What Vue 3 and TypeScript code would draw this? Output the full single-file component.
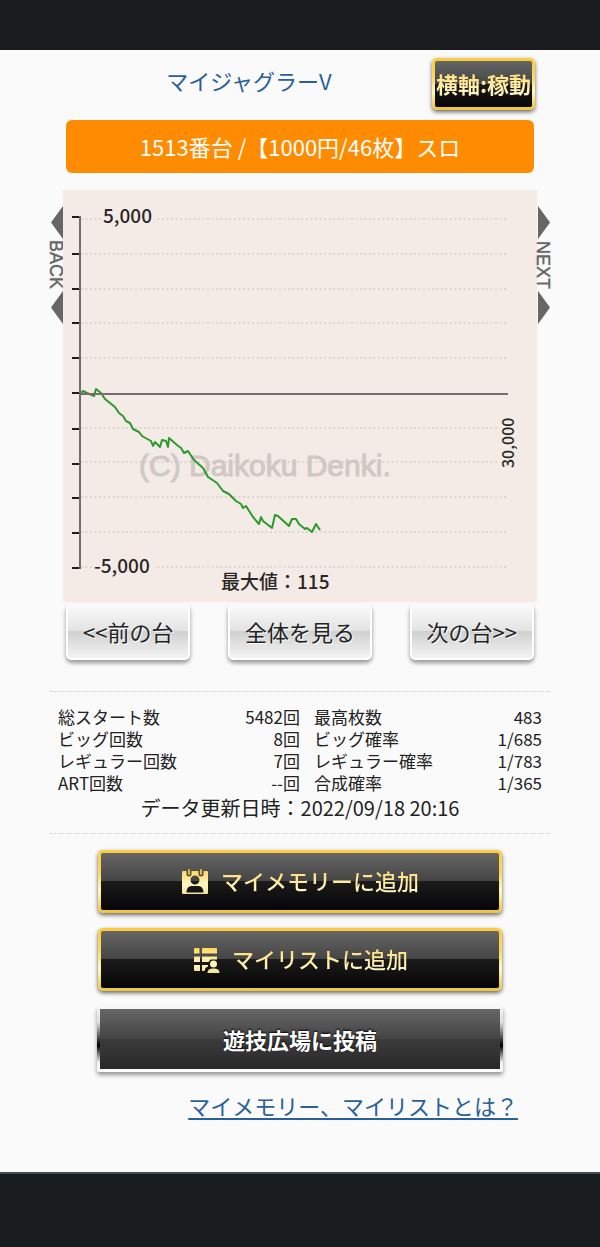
<script setup lang="ts">
interface StatRow {
  label: string
  value: string
  rateLabel: string
  rate: string
}

const stats: StatRow[] = [
  { label: '総スタート数', value: '5482回', rateLabel: '最高枚数', rate: '483' },
  { label: 'ビッグ回数', value: '8回', rateLabel: 'ビッグ確率', rate: '1/685' },
  { label: 'レギュラー回数', value: '7回', rateLabel: 'レギュラー確率', rate: '1/783' },
  { label: 'ART回数', value: '--回', rateLabel: '合成確率', rate: '1/365' },
]

const gridLines: number[] = [29, 64, 99, 133, 168, 238, 272, 307, 342, 377]
const ticks: number[] = [27, 64, 99, 133, 168, 203, 239, 274, 308, 343, 378]

// Medal balance over play: [x, y] in chart units.
const balance: [number, number][] = [
  [18, 203], [20, 201], [24, 203], [31, 206], [33, 199], [38, 203], [42, 209], [47, 213],
  [52, 217], [56, 223], [60, 226], [63, 231], [67, 233], [70, 239], [76, 242], [79, 246],
  [88, 251], [90, 256], [92, 252], [97, 257], [99, 250], [103, 251], [105, 257], [106, 248],
  [114, 255], [118, 258], [121, 263], [125, 261], [131, 270], [140, 278], [145, 287],
  [154, 293], [160, 301], [166, 304], [173, 311], [178, 314], [180, 318], [183, 316],
  [190, 327], [196, 334], [198, 327], [200, 331], [209, 338], [212, 325], [215, 326],
  [226, 336], [229, 329], [233, 329], [236, 334], [242, 339], [244, 338], [249, 342],
  [253, 334], [257, 340],
]
const balancePoints: string = balance.map((p) => p.join(',')).join(' ')
</script>

<template>
  <div class="screen">
    <div class="bar bar-top"></div>
    <main class="page">
      <header class="head">
        <h1 class="title"><a href="#machine">マイジャグラーV</a></h1>
        <button type="button" class="gold axis"><span class="gold-text">横軸:稼動</span></button>
      </header>

      <p class="unit">1513番台 /【1000円/46枚】スロ</p>

      <section class="chart-row">
        <button type="button" class="side">
          <svg viewBox="0 0 12 33" class="arrow"><path d="M12 0V33L0 16.500Z" /></svg>
          <span class="side-text">BACK</span>
          <svg viewBox="0 0 12 33" class="arrow"><path d="M12 0V33L0 16.500Z" /></svg>
        </button>
        <svg class="chart" viewBox="0 0 474 412" role="img" aria-label="スランプグラフ">
          <rect width="474" height="412" fill="#f5ebe6" />
          <line v-for="y in gridLines" :key="y" x1="18" x2="445" :y1="y" :y2="y" class="grid" />
          <rect x="38" y="17" width="54" height="18" fill="#f5ebe6" />
          <rect x="30" y="368" width="62" height="18" fill="#f5ebe6" />
          <rect x="436" y="226" width="18" height="54" fill="#f5ebe6" />
          <text x="76" y="286" class="mark">(C) Daikoku Denki.</text>
          <line v-for="y in ticks" :key="y" x1="9" x2="17" :y1="y" :y2="y" class="tick" />
          <polyline :points="balancePoints" class="balance" />
          <path d="M17 26V379M17 204H445" class="axis-line" />
          <text x="40" y="33" class="num">5,000</text>
          <text x="31" y="383" class="num">-5,000</text>
          <text x="158" y="399" class="num">最大値：115</text>
          <text transform="translate(451 278) rotate(-90)" class="num small">30,000</text>
        </svg>
        <button type="button" class="side">
          <svg viewBox="0 0 12 33" class="arrow"><path d="M0 0V33L12 16.500Z" /></svg>
          <span class="side-text">NEXT</span>
          <svg viewBox="0 0 12 33" class="arrow"><path d="M0 0V33L12 16.500Z" /></svg>
        </button>
      </section>

      <nav class="pager">
        <button type="button" class="light">&lt;&lt;前の台</button>
        <button type="button" class="light">全体を見る</button>
        <button type="button" class="light">次の台&gt;&gt;</button>
      </nav>

      <section class="data">
        <table class="stats">
          <colgroup>
            <col class="col-label" />
            <col class="col-value" />
            <col class="col-label" />
            <col class="col-value" />
          </colgroup>
          <tbody>
            <tr v-for="row in stats" :key="row.label">
              <th scope="row">{{ row.label }}</th>
              <td>{{ row.value }}</td>
              <th scope="row" class="second">{{ row.rateLabel }}</th>
              <td>{{ row.rate }}</td>
            </tr>
          </tbody>
        </table>
        <p class="updated">データ更新日時：2022/09/18 20:16</p>
      </section>

      <div class="actions">
        <button type="button" class="gold wide">
          <svg class="icon" viewBox="0 0 28 28">
            <defs>
              <linearGradient id="gold-fill" x1="0" y1="0" x2="0" y2="28" gradientUnits="userSpaceOnUse">
                <stop offset="0" stop-color="#ffd24a" />
                <stop offset="0.600" stop-color="#fff6c4" />
                <stop offset="1" stop-color="#f3df93" />
              </linearGradient>
            </defs>
            <path
              fill="url(#gold-fill)"
              fill-rule="evenodd"
              d="M2 3H5.500V6a2.500 2.500 0 0 0 5 0V3H17.500V6a2.500 2.500 0 0 0 5 0V3H26a1 1 0 0 1 1 1V25a1 1 0 0 1-1 1H2a1 1 0 0 1-1-1V4a1 1 0 0 1 1-1ZM14 7.500a4.500 4.500 0 1 0 0 9a4.500 4.500 0 0 0 0-9ZM5.500 24.500H22.500C22.500 20 20 18 17 18H11C8 18 5.500 20 5.500 24.500Z"
            />
            <rect x="7" y="1" width="2" height="6" rx="1" fill="#e8bd3c" />
            <rect x="19" y="1" width="2" height="6" rx="1" fill="#e8bd3c" />
          </svg>
          <span class="gold-text">マイメモリーに追加</span>
        </button>
        <button type="button" class="gold wide">
          <svg class="icon" viewBox="0 0 28 28">
            <g fill="url(#gold-fill)">
              <path d="M3 2H7.500V7.500H2V3a1 1 0 0 1 1-1ZM10.500 2H24a1 1 0 0 1 1 1V7.500H10V2.500Z" />
              <path d="M2 10.500H8V16H2ZM10 10.500H25V13.500H18.500L16.500 16H10Z" />
              <path d="M2 19H8V25H3a1 1 0 0 1-1-1ZM10 19H16V20.500L13.500 22L12.500 25H10Z" />
              <circle cx="21.500" cy="18" r="3.500" />
              <path d="M15.500 27C15.500 23.500 18 22.500 21.500 22.500S27.500 23.500 27.500 27Z" />
            </g>
          </svg>
          <span class="gold-text">マイリストに追加</span>
        </button>
        <button type="button" class="silver">遊技広場に投稿</button>
      </div>

      <p class="help"><a href="#help">マイメモリー、マイリストとは？</a></p>
    </main>
    <div class="bar bar-bottom"></div>
  </div>
</template>

<style>
body {
  background: #fafafa;
}
</style>

<style scoped>
.screen {
  display: flex;
  flex-direction: column;
  min-height: 100vh;
  background: #fafafa;
  color: #222;
  font-family: "Noto Sans CJK JP", sans-serif;
  font-size: 22px;
  line-height: 32px;
}
.screen * {
  box-sizing: border-box;
}
.bar {
  background: #181c1f;
}
.bar-top {
  height: 50px;
}
.bar-bottom {
  height: 75px;
  border-top: 2px solid #43494c;
}
.page {
  flex: 1;
  padding: 8px 50px 0;
}
button {
  margin: 0;
  padding: 0;
  border: 0;
  font: inherit;
  color: inherit;
  white-space: nowrap;
  cursor: pointer;
}
p,
h1 {
  margin: 0;
}
a {
  color: #2a6099;
}
.head {
  display: flex;
  align-items: center;
  margin: 0 15px 0 16px;
}
.title {
  flex: 1;
  font-size: 22px;
  font-weight: 400;
  text-align: center;
  padding-bottom: 8px;
}
.title a {
  text-decoration: none;
}
.gold {
  display: flex;
  align-items: center;
  justify-content: center;
  border: 3px solid transparent;
  border-radius: 5px;
  background:
    linear-gradient(#666 0%, #444 50%, #1b1b1b 50%, #060606 100%) padding-box,
    linear-gradient(#fccb3d 0%, #fbd75c 35%, #fff9c0 65%, #f6d04f 90%, #eec23c 100%) border-box;
  box-shadow: 0 2px 4px rgba(0, 0, 0, 0.600);
}
.axis {
  width: 103px;
  height: 52px;
}
.axis .gold-text {
  font-weight: 700;
}
.gold-text {
  padding-bottom: 3px;
  font-weight: 500;
  color: transparent;
  background: linear-gradient(#ffdc72 15%, #fff5be 75%);
  background-clip: text;
  -webkit-background-clip: text;
}
.unit {
  margin: 10px 16px 0;
  padding: 10px 0 11px;
  border-radius: 6px;
  background: #ff8c00;
  color: #fff;
  text-align: center;
}
.chart-row {
  display: flex;
  align-items: flex-start;
  margin-top: 17px;
}
.chart {
  flex: 1;
  min-width: 0;
  display: block;
}
.side {
  display: flex;
  flex: none;
  flex-direction: column;
  align-items: center;
  width: 13px;
  padding-top: 16px;
  background: none;
  color: #666;
}
.arrow {
  display: block;
  width: 12px;
  height: 33px;
  fill: #666;
}
.side-text {
  height: 52px;
  margin-right: 2px;
  writing-mode: vertical-rl;
  font-family: "Liberation Sans", sans-serif;
  font-size: 18px;
  line-height: 13px;
  text-align: center;
  text-shadow: 0 0 1px #666;
}
.grid {
  stroke: #d6cecd;
  stroke-width: 1.500;
  stroke-dasharray: 2 2.500;
}
.tick {
  stroke: #221c1c;
  stroke-width: 2;
}
.axis-line {
  fill: none;
  stroke: #7a6c6c;
  stroke-width: 2;
}
.balance {
  fill: none;
  stroke: #2a9a2c;
  stroke-width: 2;
  stroke-linejoin: round;
}
.mark {
  font-family: "Liberation Sans", sans-serif;
  font-size: 30px;
  fill: #d0c8c4;
  stroke: #d0c8c4;
}
.num {
  font-size: 19px;
  font-weight: 500;
  fill: #2a2626;
}
.small {
  font-size: 16px;
}
.pager {
  display: flex;
  justify-content: space-between;
  margin: 1px 16px 0;
}
.light {
  height: 57px;
  padding: 0 15px 2px;
  border: 2px solid #fff;
  border-top-color: #fafafa;
  border-radius: 6px;
  background: linear-gradient(#fafafa 0%, #e2e2e2 50%, #d0d0d0 50%, #f4f4f4 100%);
  box-shadow: 0 3px 4px rgba(0, 0, 0, 0.400);
  text-shadow: 1px 1px 1px #fff;
}
.data {
  margin-top: 31px;
  padding: 14px 8px 11px;
  border-top: 1px dotted #ccc;
  border-bottom: 1px dotted #ccc;
}
.stats {
  width: 100%;
  table-layout: fixed;
  border-collapse: collapse;
  font-size: 17px;
  line-height: 22px;
}
.col-label {
  width: 30%;
}
.col-value {
  width: 20%;
}
.stats th,
.stats td {
  padding: 0;
  font-weight: 400;
  text-align: left;
  white-space: nowrap;
}
.stats td {
  text-align: right;
}
.stats .second {
  padding-left: 14px;
}
.updated {
  font-size: 20px;
  line-height: 28px;
  text-align: center;
}
.actions {
  display: flex;
  flex-direction: column;
  gap: 15px;
  margin: 16px 47px 0;
}
.wide {
  height: 63px;
  margin: 0 1px;
  gap: 12px;
}
.icon {
  width: 28px;
  height: 28px;
}
.silver {
  height: 66px;
  border: 3px solid transparent;
  border-radius: 3px;
  background:
    linear-gradient(#666 0%, #444 50%, #3b3b3b 50%, #282828 100%) padding-box,
    linear-gradient(#fafafa 0%, #ddd 25%, #000 60%, #eee 85%, #fff 100%) border-box;
  box-shadow: 0 3px 4px rgba(0, 0, 0, 0.400);
  color: #fff;
  font-weight: 700;
  text-shadow: 0 -1px 2px #000;
}
.help {
  margin: 17px 32px 0;
  text-align: right;
}
.help a {
  text-decoration-thickness: 2px;
  text-underline-offset: 3px;
}
</style>
